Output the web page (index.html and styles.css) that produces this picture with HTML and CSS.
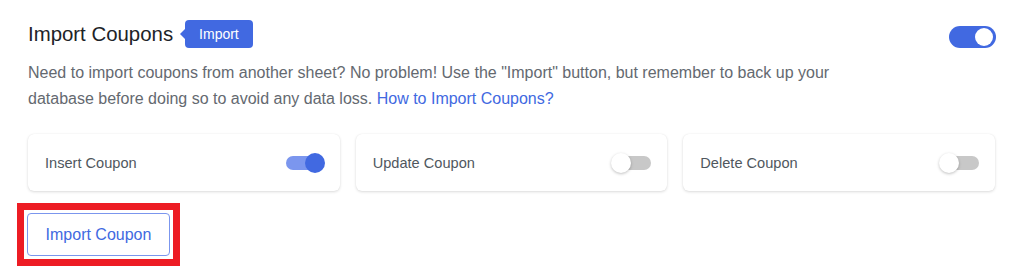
FILE: index.html
```html
<!DOCTYPE html>
<html lang="en">
<head>
    <meta charset="UTF-8">
    <meta name="viewport" content="width=device-width, initial-scale=1.0">
    <title>Import Coupons</title>
    <link rel="stylesheet" href="styles.css">
</head>
<body>
    <div class="section">
        <div class="section-head">
            <div class="title-wrap">
                <h2 class="title">Import Coupons</h2>
                <span class="badge">Import</span>
            </div>
            <span class="switch switch-on"><span class="knob"></span></span>
        </div>

        <p class="desc">
            Need to import coupons from another sheet? No problem! Use the "Import" button, but remember to back up your
            database before doing so to avoid any data loss. <a href="#" class="link">How to Import Coupons?</a>
        </p>

        <div class="options">
            <div class="option">
                <span>Insert Coupon</span>
                <span class="toggle toggle-on"><span class="dot"></span></span>
            </div>
            <div class="option">
                <span>Update Coupon</span>
                <span class="toggle"><span class="dot"></span></span>
            </div>
            <div class="option">
                <span>Delete Coupon</span>
                <span class="toggle"><span class="dot"></span></span>
            </div>
        </div>

        <div class="highlight">
            <button class="btn-outline">Import Coupon</button>
        </div>
    </div>
</body>
</html>
```

FILE: styles.css
```css
body {
    margin: 0;
    background: #FFFFFF;
    font-family: "Liberation Sans", Arial, sans-serif;
}

:root {
    --primary: #4169E1;
    --primary-light: #7B96EE;
    --text-dark: #1D2327;
    --text-gray: #646970;
    --text-card: #50575E;
}

.section {
    padding: 19px 28px 0 28px;
}

.section-head {
    display: flex;
    align-items: center;
    justify-content: space-between;
}

.title-wrap {
    display: flex;
    align-items: center;
}

.title {
    margin: 0;
    font-size: 20.4px;
    font-weight: 400;
    color: var(--text-dark);
    line-height: 28px;
}

.badge {
    position: relative;
    margin-left: 12px;
    background: var(--primary);
    color: #FFFFFF;
    font-size: 14px;
    line-height: 28px;
    height: 28px;
    padding: 0 14px;
    border-radius: 4px;
}

.badge::before {
    content: "";
    position: absolute;
    left: -5px;
    top: 9px;
    border-top: 5px solid transparent;
    border-bottom: 5px solid transparent;
    border-right: 5px solid var(--primary);
}

.switch {
    position: relative;
    display: inline-block;
    width: 47px;
    height: 22px;
    border-radius: 11px;
    background: var(--primary);
    margin-right: 0;
    margin-top: 7px;
}

.switch .knob {
    position: absolute;
    right: 3px;
    top: 2px;
    width: 18px;
    height: 18px;
    border-radius: 50%;
    background: #FFFFFF;
}

.desc {
    margin: 12px 0 0 0;
    max-width: 820px;
    font-size: 16px;
    line-height: 26px;
    color: var(--text-gray);
}

.link {
    color: var(--primary);
    text-decoration: none;
}

.options {
    display: grid;
    grid-template-columns: repeat(3, 1fr);
    gap: 16px;
    margin-top: 22px;
    margin-right: 1px;
}

.option {
    display: flex;
    align-items: center;
    justify-content: space-between;
    height: 57px;
    padding: 0 16px 0 17px;
    background: #FFFFFF;
    border-radius: 6px;
    box-shadow: 0 1px 3px rgba(0, 0, 0, 0.14), 0 0 1px rgba(0, 0, 0, 0.08);
    font-size: 14.6px;
    color: var(--text-card);
}

.toggle {
    position: relative;
    display: inline-block;
    width: 38px;
    height: 14px;
    border-radius: 7px;
    background: #C8C8C8;
}

.toggle .dot {
    position: absolute;
    top: -3px;
    left: -2px;
    width: 20px;
    height: 20px;
    border-radius: 50%;
    background: #FFFFFF;
    box-shadow: 0 1px 3px rgba(0, 0, 0, 0.25);
}

.toggle-on {
    background: var(--primary-light);
}

.toggle-on .dot {
    left: auto;
    right: -1px;
    background: var(--primary);
    box-shadow: none;
}

.highlight {
    display: inline-block;
    margin: 12px 0 0 -11px;
    padding: 3px;
    border: 7px solid #ED1C24;
}

.btn-outline {
    display: block;
    width: 143px;
    height: 43px;
    background: #FFFFFF;
    border: 1px solid var(--primary-light);
    border-radius: 4px;
    color: var(--primary);
    font-family: "Liberation Sans", Arial, sans-serif;
    font-size: 16px;
    cursor: pointer;
}
```
